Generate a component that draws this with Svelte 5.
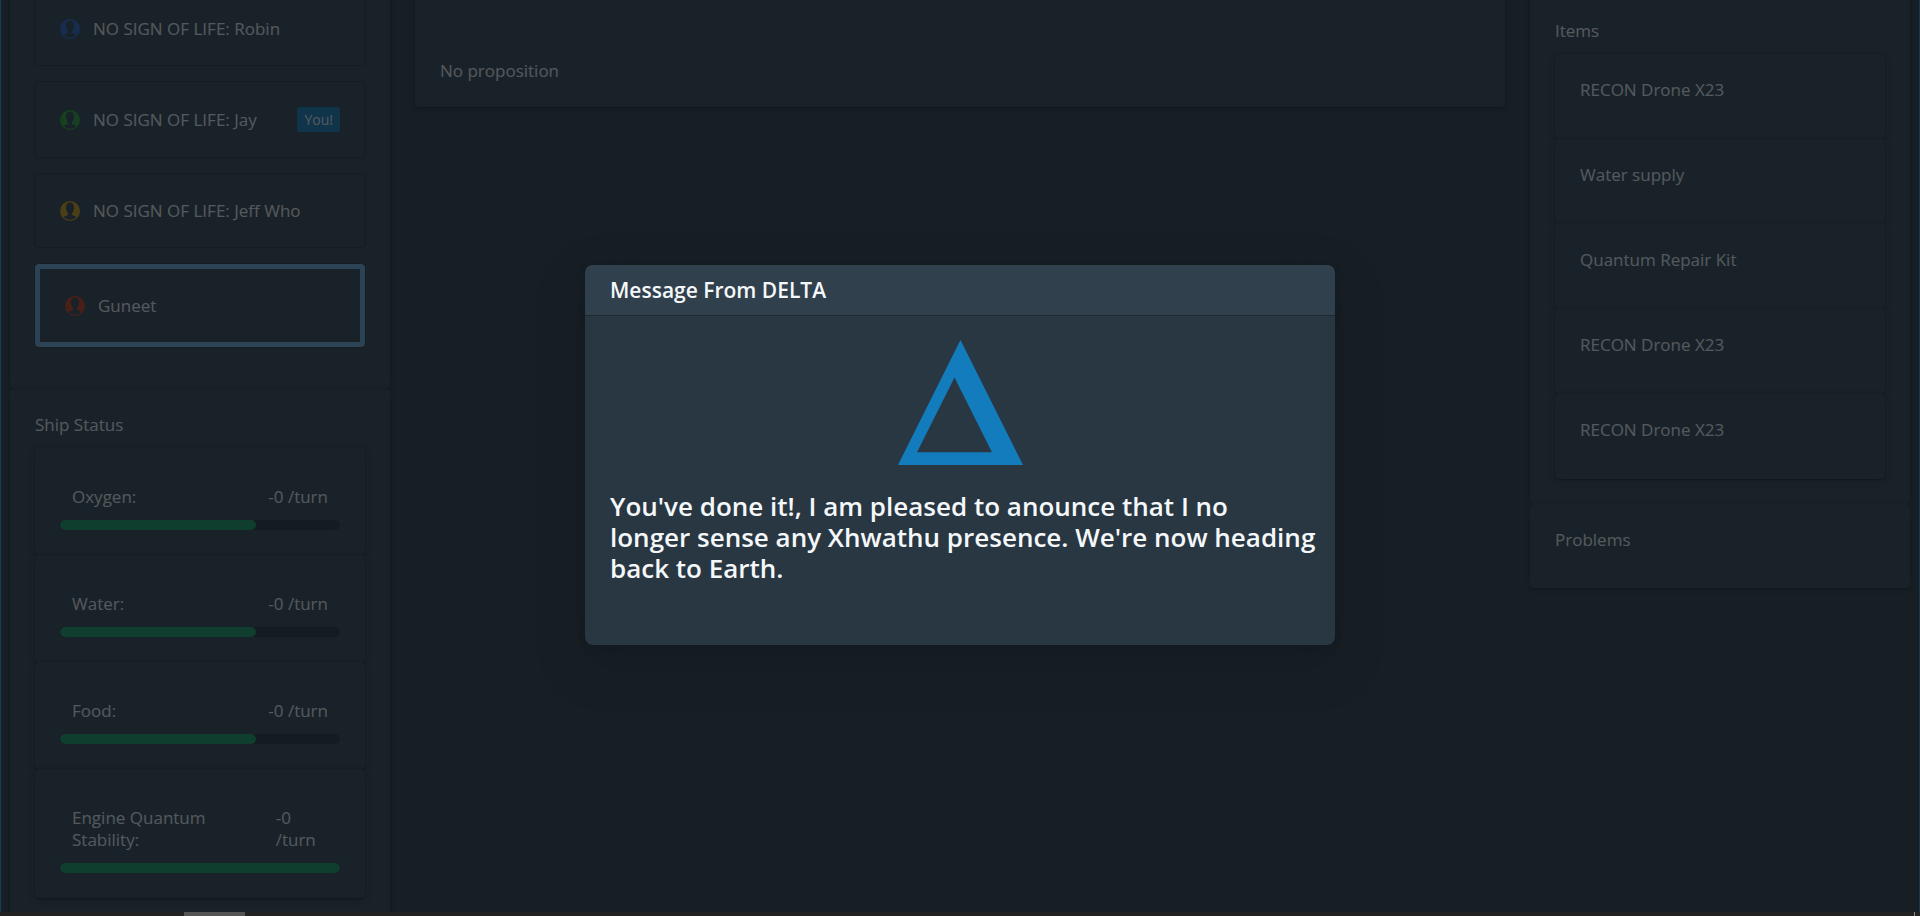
<script lang="ts">
	type Player = { name: string; color: string; alive: boolean; you?: boolean; selected?: boolean };

	const players: Player[] = [
		{ name: 'Robin', color: '#2965cc', alive: false },
		{ name: 'Jay', color: '#29a634', alive: false, you: true },
		{ name: 'Jeff Who', color: '#d99e0b', alive: false },
		{ name: 'Guneet', color: '#d13913', alive: true, selected: true }
	];

	const resources = [
		{ name: 'Oxygen', value: 70, change: '-0' },
		{ name: 'Water', value: 70, change: '-0' },
		{ name: 'Food', value: 70, change: '-0' },
		{ name: 'Engine Quantum Stability', value: 100, change: '-0' }
	];

	const items = ['RECON Drone X23', 'Water supply', 'Quantum Repair Kit', 'RECON Drone X23', 'RECON Drone X23'];
</script>

<div class="window">
	<div class="viewport">
		<div class="board">
			<aside class="column">
				<section class="panel">
					{#each players as player}
						<div class="card player" class:selected={player.selected}>
							<svg class="avatar" viewBox="0 0 16 16" fill={player.color} aria-hidden="true">
								<path
									fill-rule="evenodd"
									d="M8 0a8 8 0 1 0 0 16A8 8 0 0 0 8 0zM8 14.900c-2 0-3.700-.8-4.900-2.200.4-.4 1-.7 1.600-.9.9-.3 1.600-.6 1.700-1.100.1-.5 0-.9-.2-1.200-.6-.7-.9-1.500-1-2.400-.3-.2-.5-.6-.5-1 0-.3.1-.5.2-.7C4.700 2.900 5.700 1.200 8 1.200s3.300 1.700 3.100 4.200c.1.200.2.400.2.700 0 .4-.2.800-.5 1-.1.900-.4 1.700-1 2.400-.2.300-.3.700-.2 1.200.1.500.8.800 1.700 1.100.6.200 1.200.500 1.600.9C11.700 14.100 10 14.900 8 14.900z"
								/>
							</svg>
							<span>{player.alive ? '' : 'NO SIGN OF LIFE: '}{player.name}</span>
							{#if player.you}
								<span class="tag">You!</span>
							{/if}
						</div>
					{/each}
				</section>

				<section class="panel">
					<h6>Ship Status</h6>
					{#each resources as resource}
						<div class="card">
							<div class="resource">
								<span>{resource.name}:</span>
								<span>{resource.change} /turn</span>
							</div>
							<div class="track" role="progressbar" aria-label={resource.name} aria-valuenow={resource.value}>
								<div class="meter" style="width: {resource.value}%"></div>
							</div>
						</div>
					{/each}
				</section>
			</aside>

			<main class="panel proposition">
				<p>No proposition</p>
			</main>

			<aside class="column">
				<section class="panel inventory">
					<h6>Items</h6>
					{#each items as item}
						<div class="card item">{item}</div>
					{/each}
				</section>
				<section class="panel">
					<h6>Problems</h6>
				</section>
			</aside>
		</div>

		<div class="backdrop">
			<div class="dialog" role="dialog" aria-modal="true" aria-labelledby="dialog-title">
				<header>
					<h4 id="dialog-title">Message From DELTA</h4>
				</header>
				<div class="message">
					<svg class="delta" viewBox="0 0 125 125" aria-hidden="true">
						<path fill="#137cbd" fill-rule="evenodd" d="M62.500 0 125 125H0zM56.500 37.500 19 112.300h75z" />
					</svg>
					<h3>
						You've done it!, I am pleased to anounce that I no longer&nbsp;sense any Xhwathu presence. We're now
						heading back to Earth.
					</h3>
				</div>
			</div>
		</div>
	</div>
	<footer class="strip">
		<div class="thumb"></div>
		<div class="tick"></div>
	</footer>
</div>

<style>
	:global(body) {
		margin: 0;
		background: #293742;
	}

	.window {
		display: flex;
		flex-direction: column;
		height: 100vh;
		overflow: hidden;
		font-family: 'Open Sans', 'Noto Sans', sans-serif;
		font-size: 17px;
		line-height: 22px;
		color: #f5f8fa;
	}

	.viewport {
		position: relative;
		flex: 1;
		min-height: 0;
		overflow: hidden;
		border-left: 1px solid #123f5e;
		border-right: 1px solid #15394c;
		background: #293742;
	}

	/* the board sits scrolled a little past its top edge */
	.board {
		display: grid;
		grid-template-columns: 380px 1fr 380px;
		align-items: start;
		gap: 25px;
		margin-top: -33px;
		padding: 0 9px;
	}

	.panel,
	.card {
		box-sizing: border-box;
		padding: 25px;
		border-radius: 4px;
		background: #30404d;
		box-shadow:
			0 0 0 1px rgba(16, 22, 26, 0.2),
			0 1px 1px rgba(16, 22, 26, 0.4),
			0 2px 6px rgba(16, 22, 26, 0.4);
	}

	h6 {
		margin: 0 0 12px;
		font-size: 17px;
		font-weight: 400;
		line-height: 22px;
	}

	p {
		margin: 0;
	}

	.player {
		display: flex;
		align-items: center;
		gap: 13px;
		margin-bottom: 17px;
		box-shadow: 0 0 0 1px rgba(16, 22, 26, 0.4);
	}

	.player > span {
		line-height: 23px;
	}

	.player.selected {
		border: 5px solid #6fb0e0;
	}

	.avatar {
		flex: none;
		width: 20px;
		height: 20px;
	}

	.player > .tag {
		margin-left: auto;
		padding: 0 7px;
		border-radius: 3px;
		background: #137cbd;
		font-size: 14px;
		line-height: 25px;
	}

	.resource {
		display: flex;
		justify-content: space-between;
	}

	.resource span {
		padding: 13px 12px 12px;
	}

	.track {
		height: 10px;
		overflow: hidden;
		border-radius: 5px;
		background: rgba(16, 22, 26, 0.5);
	}

	.meter {
		height: 100%;
		border-radius: 5px;
		background: #0f9960;
	}

	.proposition {
		display: flex;
		align-items: flex-end;
		min-height: 140px;
	}

	.inventory {
		padding-top: 53px;
	}

	.item {
		padding-bottom: 38px;
	}

	.backdrop {
		position: absolute;
		inset: 0;
		display: flex;
		align-items: center;
		justify-content: center;
		padding-bottom: 3px;
		background: rgba(16, 22, 26, 0.7);
	}

	.dialog {
		box-sizing: border-box;
		width: 750px;
		padding-bottom: 61px;
		border-radius: 8px;
		background: #293742;
		box-shadow:
			0 0 0 1px rgba(16, 22, 26, 0.1),
			0 4px 8px rgba(16, 22, 26, 0.2),
			0 18px 46px 6px rgba(16, 22, 26, 0.2);
	}

	.dialog header {
		padding: 10px 25px;
		border-radius: 8px 8px 0 0;
		background: #30404d;
		box-shadow: 0 1px 0 rgba(16, 22, 26, 0.4);
	}

	h4 {
		margin: 0;
		font-size: 21px;
		font-weight: 600;
		line-height: 30px;
	}

	.message {
		padding: 25px 25px 0;
	}

	.delta {
		display: block;
		width: 125px;
		height: 125px;
		margin: 0 auto 26px;
	}

	/* long lines may run a little into the right padding */
	h3 {
		margin: 0 -15px 0 0;
		font-size: 26px;
		font-weight: 600;
		line-height: 31px;
	}

	.strip {
		display: flex;
		justify-content: space-between;
		height: 4px;
		padding: 0 5px 0 184px;
		background: #222222;
	}

	.thumb {
		width: 61px;
		background: #555555;
	}

	.tick {
		width: 1px;
		background: #888888;
	}
</style>
